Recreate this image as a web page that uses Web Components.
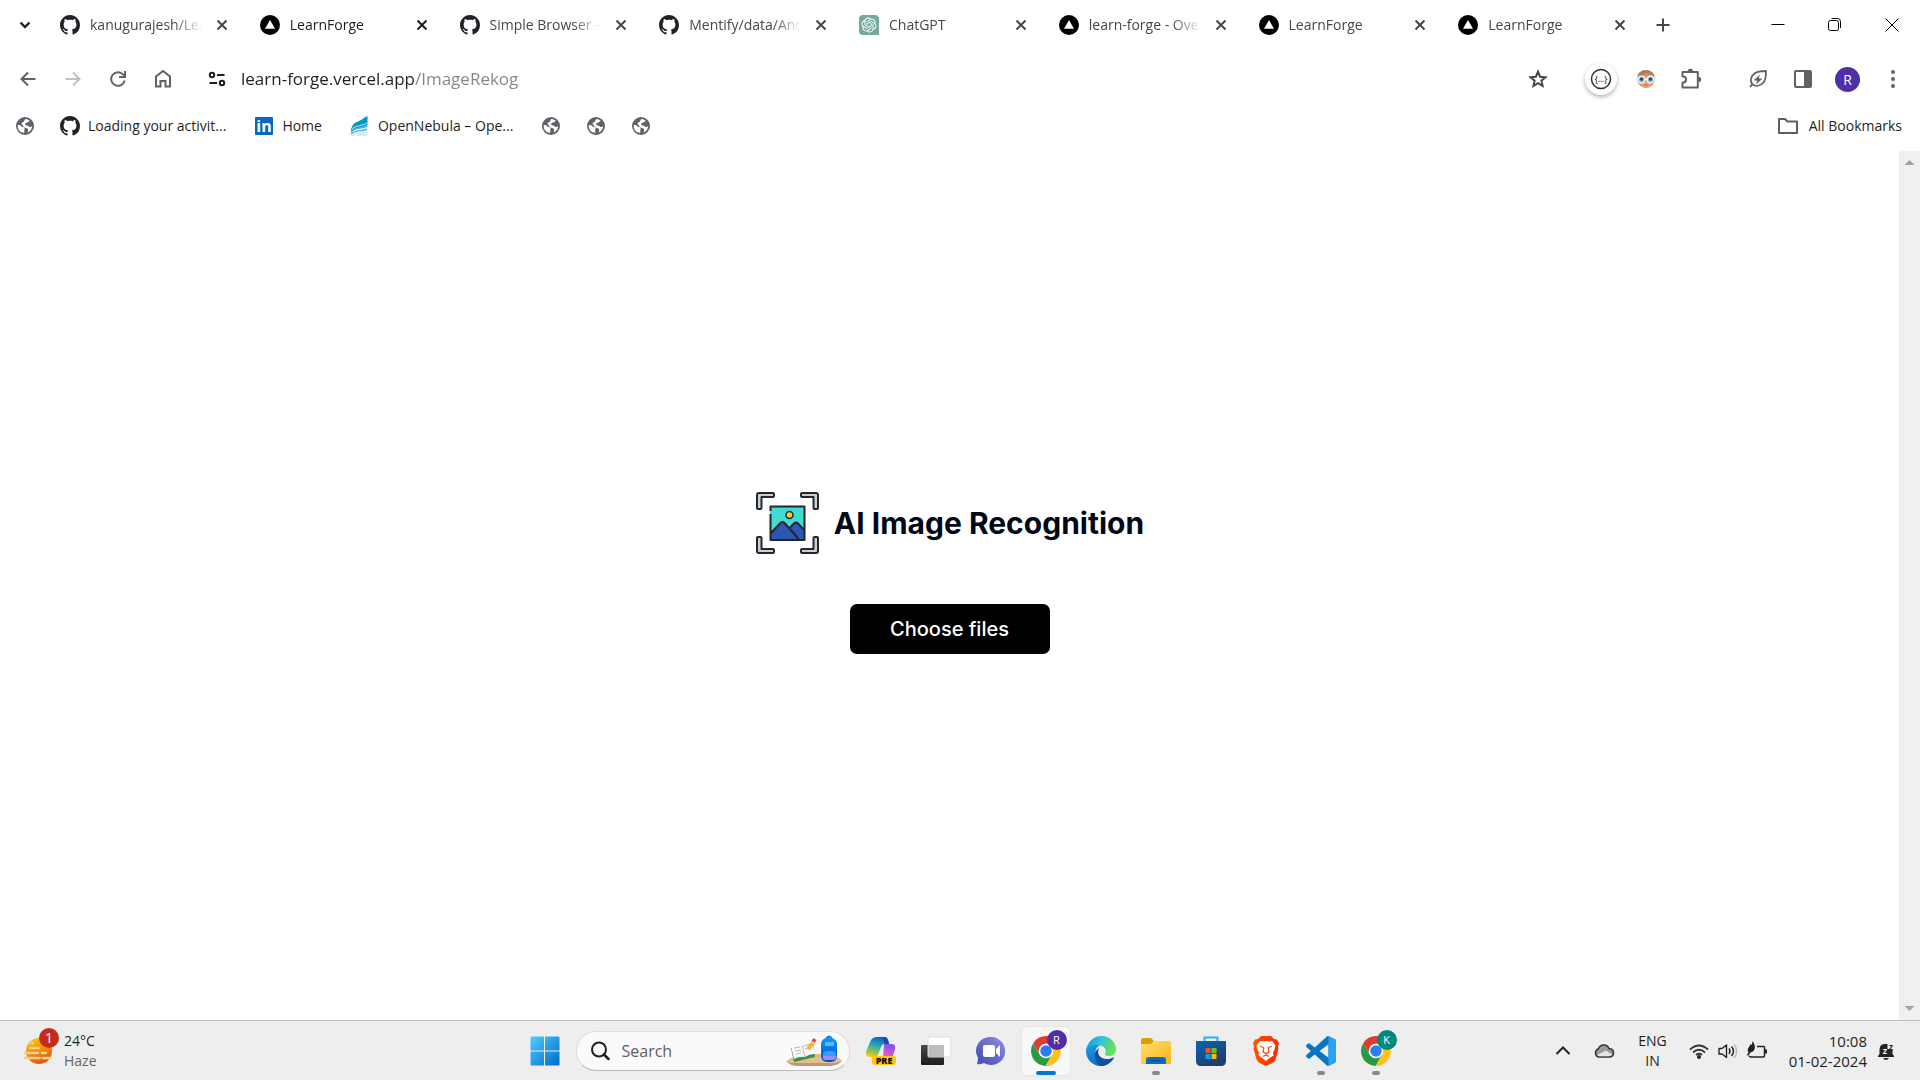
<!DOCTYPE html>
<html lang="en">
<head>
<meta charset="utf-8">
<title>LearnForge</title>
<style>
  body {
    margin: 0;
    background: #fff;
    color: #1f1f1f;
    font-family: "Open Sans", "Noto Sans", sans-serif;
    font-size: 14px;
    line-height: 20px;
  }
</style>
</head>
<body>
<desktop-screen>
  <tab-strip slot="chrome">
    <browser-tab icon="github">kanugurajesh/LearnForge</browser-tab>
    <browser-tab icon="vercel" active>LearnForge</browser-tab>
    <browser-tab icon="github">Simple Browser - Visual</browser-tab>
    <browser-tab icon="github">Mentify/data/Android</browser-tab>
    <browser-tab icon="chatgpt">ChatGPT</browser-tab>
    <browser-tab icon="vercel">learn-forge - Overview</browser-tab>
    <browser-tab icon="vercel">LearnForge</browser-tab>
    <browser-tab icon="vercel">LearnForge</browser-tab>
  </tab-strip>
  <address-bar slot="chrome"></address-bar>
  <bookmarks-bar slot="chrome">
    <bookmark-link icon="globe" label="Bookmark"></bookmark-link>
    <bookmark-link icon="github">Loading your activit...</bookmark-link>
    <bookmark-link icon="linkedin">Home</bookmark-link>
    <bookmark-link icon="nebula">OpenNebula – Ope...</bookmark-link>
    <bookmark-link icon="globe" label="Bookmark"></bookmark-link>
    <bookmark-link icon="globe" label="Bookmark"></bookmark-link>
    <bookmark-link icon="globe" label="Bookmark"></bookmark-link>
    <bookmark-link slot="end" icon="folder">All Bookmarks</bookmark-link>
  </bookmarks-bar>
  <image-rekog>AI Image Recognition</image-rekog>
  <task-bar slot="taskbar">
    <task-app icon="copilot" label="Copilot"></task-app>
    <task-app icon="taskview" label="Task view"></task-app>
    <task-app icon="meet" label="Chat"></task-app>
    <task-app icon="chrome" label="Google Chrome" badge="R" state="active"></task-app>
    <task-app icon="edge" label="Microsoft Edge"></task-app>
    <task-app icon="explorer" label="File Explorer" state="open"></task-app>
    <task-app icon="store" label="Microsoft Store"></task-app>
    <task-app icon="brave" label="Brave"></task-app>
    <task-app icon="vscode" label="Visual Studio Code" state="open"></task-app>
    <task-app icon="chrome" label="Google Chrome" badge="K" state="open"></task-app>
  </task-bar>
</desktop-screen>

<script>
// name: [width, height, markup]
const icons = {
  github: [20, 20, `<path transform="scale(1.25)" fill="#1f2328" d="M8 0C3.58 0 0 3.58 0 8c0 3.54 2.29 6.53 5.47 7.59.4.07.55-.17.55-.38 0-.19-.01-.82-.01-1.49-2.01.37-2.53-.49-2.69-.94-.09-.23-.48-.94-.82-1.13-.28-.15-.68-.52-.01-.53.63-.01 1.08.58 1.23.82.72 1.21 1.87.87 2.33.66.07-.52.28-.87.51-1.07-1.78-.2-3.64-.89-3.64-3.95 0-.87.31-1.59.82-2.15-.08-.2-.36-1.02.08-2.12 0 0 .67-.21 2.2.82.64-.18 1.32-.27 2-.27s1.36.09 2 .27c1.53-1.04 2.2-.82 2.2-.82.44 1.1.16 1.92.08 2.12.51.56.82 1.27.82 2.15 0 3.07-1.87 3.75-3.65 3.95.29.25.54.73.54 1.48 0 1.07-.01 1.93-.01 2.2 0 .21.15.46.55.38A8.01 8.01 0 0 0 16 8c0-4.42-3.58-8-8-8z"/>`],
  vercel: [20, 20, `<circle cx="10" cy="10" r="10"/><path fill="#fff" d="M10 5l5 8.700H5z"/>`],
  chatgpt: [20, 20, `<path fill="#74aa9c" d="M4 0h12a4 4 0 0 1 4 4v16H4a4 4 0 0 1-4-4V4a4 4 0 0 1 4-4z"/><path transform="translate(2.500 2.500) scale(.625)" fill="#fff" d="M22.2819 9.8211a5.9847 5.9847 0 0 0-.5157-4.9108 6.0462 6.0462 0 0 0-6.5098-2.9A6.0651 6.0651 0 0 0 4.9807 4.1818a5.9847 5.9847 0 0 0-3.9977 2.9 6.0462 6.0462 0 0 0 .7427 7.0966 5.98 5.98 0 0 0 .511 4.9107 6.051 6.051 0 0 0 6.5146 2.9001A5.9847 5.9847 0 0 0 13.2599 24a6.0557 6.0557 0 0 0 5.7718-4.2058 5.9894 5.9894 0 0 0 3.9977-2.9001 6.0557 6.0557 0 0 0-.7475-7.0729zm-9.022 12.6081a4.4755 4.4755 0 0 1-2.8764-1.0408l.1419-.0804 4.7783-2.7582a.7948.7948 0 0 0 .3927-.6813v-6.7369l2.02 1.1686a.071.071 0 0 1 .038.052v5.5826a4.504 4.504 0 0 1-4.4945 4.4944zm-9.6607-4.1254a4.4708 4.4708 0 0 1-.5346-3.0137l.142.0852 4.783 2.7582a.7712.7712 0 0 0 .7806 0l5.8428-3.3685v2.3324a.0804.0804 0 0 1-.0332.0615L9.74 19.9502a4.4992 4.4992 0 0 1-6.1408-1.6464zM2.3408 7.8956a4.485 4.485 0 0 1 2.3655-1.9728V11.6a.7664.7664 0 0 0 .3879.6765l5.8144 3.3543-2.0201 1.1685a.0757.0757 0 0 1-.071 0l-4.8303-2.7865A4.504 4.504 0 0 1 2.3408 7.872zm16.5963 3.8558L13.1038 8.364 15.1192 7.2a.0757.0757 0 0 1 .071 0l4.8303 2.7913a4.4944 4.4944 0 0 1-.6765 8.1042v-5.6772a.79.79 0 0 0-.407-.667zm2.0107-3.0231l-.142-.0852-4.7735-2.7818a.7759.7759 0 0 0-.7854 0L9.409 9.2297V6.8974a.0662.0662 0 0 1 .0284-.0615l4.8303-2.7866a4.4992 4.4992 0 0 1 6.6802 4.66zM8.3065 12.863l-2.02-1.1638a.0804.0804 0 0 1-.038-.0567V6.0742a4.4992 4.4992 0 0 1 7.3757-3.4537l-.142.0805L8.704 5.459a.7948.7948 0 0 0-.3927.6813zm1.0976-2.3654l2.602-1.4998 2.6069 1.4998v2.9994l-2.5974 1.4997-2.6067-1.4997Z"/>`],
  globe: [20, 20, `<circle cx="10" cy="10" r="9" fill="#5f6368"/><path fill="#fff" d="M2.800 9c2 0 3 .3 3.600 1.300.5.900 1.400 1 2.300 1 1 0 1.200.8.8 1.600-.4.700-.2 1.400-.2 3.800C5.800 17 2.800 14 2.800 10.500zM10.500 2.900c2 .2 3.500 1 4.600 2.200-1.600.2-1.800 1.300-2.900 1.500-1.200.2-1.900.6-2 1.700-.1.900.7 1.300 1.800 1.300 1.500 0 1.700 1.200 2.700 1.500.9.200 1.500-.2 2.400-1-.1 3-1.800 5.400-4.600 6.400.8-1.700 1-3.400-.4-4.200-1.400-.7-3.400-.6-4-2.300-.4-1.400-1.700-1.500-1.500-2.700.2-1.200 2-.9 2.500-2.100.4-.9.500-1.700 1.400-2.300z"/>`],
  linkedin: [20, 20, `<rect x="1" y="1" width="18" height="18" rx="1" fill="#0a66c2"/><text x="10" y="16" fill="#fff" font-family="Open Sans, sans-serif" font-size="16" font-weight="700" text-anchor="middle">in</text>`],
  nebula: [20, 20, `<path fill="#0098c3" d="M2 11C4 6 8 6 12 3.500 14 2 15 1 17.500 0v9C13 12 6 11 1 15c0-2 0-2.500 1-4z"/><path fill="none" stroke="#48b8da" stroke-width="1.500" d="M1 16c4-5 11-3 16-6M1 18c5-5 11-2 16-5"/><path fill="none" stroke="#a5dced" d="M2 20c5-4 10-2 15-4M7 20c4-2 6-1 10-1"/><path stroke="#fff" fill="none" stroke-width=".8" d="M2 13c4-4 11-3 15-6"/>`],
  folder: [24, 20, `<path fill="none" stroke="#5f5f5f" stroke-width="2" stroke-linejoin="round" d="M2 3h6l2.500 2.500H20V17H2z"/>`],
  chevron: [20, 20, `<path fill="none" stroke="#1f1f1f" stroke-width="2.400" d="M5.500 7.500L10 12l4.500-4.500"/>`],
  close: [20, 20, `<path fill="none" stroke="currentColor" stroke-width="2" d="M5.500 5.500l9 9m0-9l-9 9"/>`],
  plus: [20, 20, `<path fill="none" stroke="#474747" stroke-width="2" d="M10 3.500v13M3.500 10h13"/>`],
  minimize: [20, 20, `<path stroke="#000" d="M3.500 9.500h13"/>`],
  restore: [20, 20, `<path fill="none" stroke="#000" d="M3.500 7.500q0-2 2-2h6q2 0 2 2v6q0 2-2 2h-6q-2 0-2-2zM6.500 3.500h6q3 0 3 3v6.500"/>`],
  exit: [20, 20, `<path fill="none" stroke="#000" d="M3.500 3.500l13 13m0-13l-13 13"/>`],
  back: [20, 20, `<path fill="none" stroke="#5f6368" stroke-width="2" d="M17.500 10H4M10 3.500L3.500 10l6.500 6.500"/>`],
  forward: [20, 20, `<path fill="none" stroke="#bdc1c6" stroke-width="2" d="M2.500 10H16M10 3.500l6.500 6.500-6.500 6.500"/>`],
  reload: [20, 20, `<path fill="none" stroke="#5f6368" stroke-width="2" d="M16.600 11.500A6.800 6.800 0 1 1 15 5.400L16 6.500M17 2v6h-6"/>`],
  home: [20, 20, `<path fill="none" stroke="#5f6368" stroke-width="2" d="M3 17.500V7.500L10 2l7 5.500v10h-4.500V12h-5v5.500z"/>`],
  tune: [20, 20, `<g fill="none" stroke="#1f1f1f" stroke-width="2"><circle cx="5" cy="6" r="2.200"/><path d="M10 6h7.500M2.500 14H10"/><circle cx="15" cy="14" r="2.200"/></g>`],
  star: [20, 20, `<path fill="none" stroke="#474747" stroke-width="2" d="M10 2.700l2.100 5 5.400.5-4.100 3.500 1.200 5.300L10 14.200 5.400 17l1.200-5.300-4.100-3.500 5.400-.5z"/>`],
  json: [32, 32, `<circle cx="16" cy="16" r="9.500" fill="none" stroke="#333" stroke-width="1.500"/><text x="16" y="19" fill="#333" font-family="Open Sans, sans-serif" font-size="8" font-weight="600" text-anchor="middle">{...}</text>`],
  avatar: [20, 20, `<circle cx="10" cy="10" r="9" fill="#d8946a"/><path fill="#a9835a" d="M1.500 8C2 3 6 1 10 1s8 2 8.500 7l-3-2-6-2-4 3z"/><path fill="#e4a57f" d="M4 12h12c0 4-3 7-6 7s-6-3-6-7z"/><g fill="#6ba7bd" stroke="#e9f4f7" stroke-width="1.600"><circle cx="5.500" cy="10.500" r="3.300"/><circle cx="14.500" cy="10.500" r="3.300"/></g><path stroke="#e9f4f7" stroke-width="1.500" d="M0 9.500h2.500M17.500 9.500H20M8.500 10h3"/><circle cx="5.500" cy="10" r="1.500" fill="#1d4a63"/><circle cx="14.500" cy="10" r="1.500" fill="#1d4a63"/><path stroke="#b85c48" d="M8 16h4"/>`],
  puzzle: [22, 22, `<path fill="none" stroke="#5f6368" stroke-width="2" stroke-linejoin="round" d="M2.500 4h15.300v15.500H2.500v-4.800c4.800-.5 4.800-6 0-6.500z"/><path fill="#5f6368" d="M7.700 3.500a2.700 2.700 0 0 1 5.400 0zM18.500 8.800a2.700 2.700 0 0 1 0 5.400z"/>`],
  leaf: [20, 20, `<path fill="none" stroke="#5f6368" stroke-width="1.800" stroke-linejoin="round" d="M2 18l2.300-2.800C1.500 11.500 3 7 6.500 4.500 9.500 2.300 13 2 18 2c0 5 0 8.500-2.500 11.500C12.500 17 8 18 4.300 15.200"/><path fill="#5f6368" d="M12 5.500l-6.300 5.700 3.600.6L8 15.500l6.300-5.700-3.600-.6z"/>`],
  panel: [20, 20, `<rect x="2" y="2" width="16" height="16" rx="1" fill="none" stroke="#5f6368" stroke-width="2"/><path fill="#5f6368" d="M11 2h7v16h-7z"/>`],
  menu: [20, 20, `<g fill="#5f6368"><circle cx="10" cy="3" r="2"/><circle cx="10" cy="10" r="2"/><circle cx="10" cy="17" r="2"/></g>`],
  arrowUp: [21, 24, `<path fill="#a3a3a3" d="M5.500 14L10.500 9l5 5z"/>`],
  arrowDown: [21, 24, `<path fill="#a3a3a3" d="M5.500 10l5 5 5-5z"/>`],
  scan: [64, 64, `
    <g fill="#c8d0d6" stroke="#23272b" stroke-width="2" stroke-linejoin="round">
      <path d="M4 2h14q1 0 1 1v2q0 1-1 1H6.500v11q0 1-1 1H3q-1 0-1-1V4q0-2 2-2z"/>
      <path d="M60 2H47q-1 0-1 1v2q0 1 1 1h11.500v11q0 1 1 1H62q1 0 1-1V4q0-2-2-2z"/>
      <path d="M4 62h14q1 0 1-1v-2q0-1-1-1H6.500V47q0-1-1-1H3q-1 0-1 1v13q0 2 2 2z"/>
      <path d="M60 62H47q-1 0-1-1v-2q0-1 1-1h11.500V47q0-1 1-1H62q1 0 1 1v13q0 2-2 2z"/>
    </g>
    <path fill="#40dbd3" d="M15 15h35v34H15z"/>
    <path fill="#2d55b4" d="M15 42l12-12 7 7 6-6 10 9v9H15z"/>
    <path fill="none" stroke="#23272b" stroke-width="2" stroke-linejoin="round" d="M15.500 20v-4.500h34v33.500h-34V23M16 42l9.500-10q2-2 4 0L42 46l2 3M34 37.500l5-5q2-2 4 0l6.500 7"/>
    <circle cx="34.500" cy="24" r="3.500" fill="#fccb2e" stroke="#23272b" stroke-width="1.500"/>`],
  haze: [30, 30, `<defs><linearGradient id="s" x2=".4" y2="1"><stop stop-color="#ffd400"/><stop offset="1" stop-color="#e8590c"/></linearGradient></defs>
    <circle cx="15" cy="15" r="13" fill="url(#s)"/><g stroke="#e8cf92" stroke-width="2.600" stroke-linecap="round"><path d="M6 7h3M6 12h9M1 17h13M18 17h4M1 22h15M19 22h8"/></g>`],
  windows: [30, 30, `<defs><linearGradient id="w" gradientUnits="userSpaceOnUse" x1="0" y1="0" x2="30" y2="30"><stop stop-color="#4fd0ff"/><stop offset="1" stop-color="#0067c8"/></linearGradient></defs>
    <path fill="url(#w)" d="M1.500.500H14v14H.500v-13q0-1 1-1zM15 .500h13.500q1 0 1 1v13H15zM.500 15.500H14v14H1.500q-1 0-1-1zM15 15.500h14.500v13q0 1-1 1H15z"/>`],
  search: [20, 20, `<circle cx="9" cy="8.500" r="7" fill="none" stroke="#202020" stroke-width="2"/><path stroke="#202020" stroke-width="2.500" stroke-linecap="round" d="M14 13.500l4.500 4.500"/>`],
  school: [58, 34, `<defs><linearGradient id="b" x2="0" y2="1"><stop stop-color="#1296ff"/><stop offset="1" stop-color="#0050c5"/></linearGradient></defs>
    <path fill="#e2bd91" d="M1 27Q14 18 36 20q16 0 21 7-3 3-10 3H10q-6 0-9-3z"/><path fill="#c59769" d="M1 27q4 5 12 5h33q8-1 11-5-4 2-10 2H10q-6 0-9-2z"/>
    <path fill="#3b9149" d="M6 14l22-4 2 13-21 5z"/><path fill="#fafafa" d="M6 12q6-3 11-1 4-4 10-4l3 13q-6 0-10 3-5-1-11 2z"/><path stroke="#bbb" fill="none" d="M17 11l3 12M9 14l6-1M10 17l6-1M11 20l5-1M19 12l6-2M20 15l5-1"/>
    <path stroke="#ffb02e" stroke-width="4" d="M23 15l5-6"/><path stroke="#ef4b4b" stroke-width="4" d="M28 8l2-3"/>
    <path fill="none" stroke="#0c74d8" stroke-width="2" d="M41 5q3-5 6 0"/><rect x="36" y="4" width="16" height="24" rx="6" fill="url(#b)"/><path fill="#56b8ff" d="M40 8h9v4h-9z"/><rect x="38" y="17" width="13" height="9" rx="4" fill="#369cff"/><path fill="#a289ef" d="M38 22h13v2q-1 2-3 2h-7q-3 0-3-2z"/>`],
  copilot: [30, 30, `<defs><linearGradient id="c" x1=".6" x2=".3" y2="1"><stop stop-color="#0c5fd0"/><stop offset=".45" stop-color="#2ba9b0"/><stop offset=".75" stop-color="#8bc34a"/><stop offset="1" stop-color="#ffc914"/></linearGradient><linearGradient id="d" x1=".6" x2=".3" y2="1"><stop stop-color="#8050f0"/><stop offset=".5" stop-color="#e05bc0"/><stop offset="1" stop-color="#ff7a59"/></linearGradient></defs>
    <path fill="url(#d)" d="M18 8h7q5 0 4 5l-3 10q-2 5-7 5h-7q4-2 5-6z"/><path fill="url(#c)" d="M11 1h8q2 0 3 3l1 4h-4q-3 0-4 3l-3 8q-1 2-3 2H5q-6 0-5-5L4 6q2-5 7-5z"/><path fill="#144bb4" d="M16 1h3q2 0 3 3l1 4h-4l-2-5z"/>
    <rect x="6" y="20" width="24" height="9" rx="3" fill="#ffc60a"/><text x="18" y="28" fill="#111" font-family="Open Sans, sans-serif" font-size="9" font-weight="800" text-anchor="middle">PRE</text>`],
  taskview: [32, 30, `<defs><linearGradient id="t" x2="0" y2="1"><stop stop-color="#484848"/><stop offset="1" stop-color="#1c1c1c"/></linearGradient></defs>
    <rect x="1" y="9" width="23" height="20" rx="1" fill="url(#t)"/><rect x="8" y="1" width="23" height="20" rx="1" fill="#fff" stroke="#ddd"/><path fill="#bdbdbd" d="M8.500 9H24v12H8.500z"/>`],
  meet: [30, 30, `<defs><linearGradient id="m" x1="1" x2=".2" y2=".8"><stop stop-color="#a68ae6"/><stop offset=".4" stop-color="#7378d1"/><stop offset="1" stop-color="#4f58ba"/></linearGradient></defs>
    <path fill="url(#m)" d="M15 1a14 14 0 1 1-7 26q-4 2-7 1 1-3 1-6A14 14 0 0 1 15 1z"/><rect x="7" y="9" width="12" height="12" rx="2" fill="#fff"/><path fill="#fff" d="M20 13l4-4v12l-4-4z"/>`],
  chrome: [30, 30, `<g transform="translate(-1.400 -1.400) scale(.683)"><path fill="#e33b2e" d="M24 13.500H43.300A22 22 0 0 0 5.250 12.540L14.900 29.250A10.500 10.500 0 0 1 24 13.500z"/><path fill="#2a9a47" d="M14.900 29.250L5.250 12.540A22 22 0 0 0 23.450 45.970L33.100 29.250A10.500 10.500 0 0 1 14.900 29.250z"/><path fill="#fcc21b" d="M33.100 29.250L23.450 45.970A22 22 0 0 0 43.300 13.500H24A10.500 10.500 0 0 1 33.100 29.250z"/><circle cx="24" cy="24" r="10.500" fill="#fff"/><circle cx="24" cy="24" r="8.400" fill="#2f7cf0"/></g>`],
  edge: [30, 30, `<defs><linearGradient id="e" x2="1" y2=".3"><stop stop-color="#1598dc"/><stop offset=".5" stop-color="#2fc2df"/><stop offset="1" stop-color="#65e35c"/></linearGradient><linearGradient id="f" x2=".5" y2="1"><stop stop-color="#1aa0e4"/><stop offset="1" stop-color="#0d66c8"/></linearGradient></defs>
    <path fill="url(#e)" d="M.500 12C3 4 9 0 15 0c9 0 15 6 15 13 0 4.500-3 7-7 7-3 0-4.500-1-4-2 2-3 0-8-5-8.500C8 9 3 9 .500 12z"/><path fill="url(#f)" d="M.500 12C4 8 10 8 14 9.500c-4 1.500-5 5-4 8.500 2 7 9 9 16 6-3 4-7 6-11 6C6 30 0 23 0 15c0-1 .2-2 .500-3z"/><path fill="#124f9d" d="M13.500 12C11 15 12 20 16 22s9 1 11.500-.8c.7-.2.5.8-.500 2.300-3 4-7 6.500-12 6.500-4-2-6-6-6-11 0-4 2-6 4.500-7z"/>`],
  explorer: [30, 30, `<defs><linearGradient id="x" x2="1" y2="1"><stop stop-color="#ffdf68"/><stop offset="1" stop-color="#f8b51d"/></linearGradient></defs>
    <path fill="#dc9d00" d="M0 4q0-2 2-2h7q1 0 2 1l2 2-3 4H0z"/><path fill="url(#x)" d="M0 8h9q1 0 2-1l2-2h15q2 0 2 2v20q0 1-1 1H1q-1 0-1-1z"/><path fill="#0c6cbb" d="M5 28v-4q0-3 3-3h14q3 0 3 3v4z"/><path stroke="#084d8e" d="M9 24.500h12"/>`],
  store: [30, 30, `<defs><linearGradient id="o" x2=".6" y2="1"><stop stop-color="#0866b5"/><stop offset="1" stop-color="#213c68"/></linearGradient></defs>
    <path fill="none" stroke="#20b4ee" stroke-width="2" d="M8.500 7V1.500h13V7"/><path fill="url(#o)" d="M0 5h30v20q0 5-5 5H5q-5 0-5-5z"/><path fill="#f25022" d="M9.500 12h5v5h-5z"/><path fill="#7fba00" d="M15.500 12h5v5h-5z"/><path fill="#00a4ef" d="M9.500 18h5v5h-5z"/><path fill="#ffb900" d="M15.500 18h5v5h-5z"/>`],
  brave: [30, 30, `<defs><linearGradient id="v"><stop stop-color="#ff5500"/><stop offset="1" stop-color="#fb2a06"/></linearGradient></defs>
    <path fill="url(#v)" d="M10 0h10l3 3 3 .5 2 4-1 3 .5 2-3 11q-1 2-3 3.500L15 30l-6.500-3q-2-1.500-3-3.500l-3-11 .500-2-1-3 2-4 3-.5z"/>
    <path fill="#fff" d="M9 5l3 .5L15 5l3 .5 3-.5 3.500 4.500-1 4-1.500 3 .5 3-4 2.500L15 25l-3.500-3-4-2.500.5-3-1.500-3-1-4z"/><path fill="none" stroke="#fd3f05" stroke-width="1.200" d="M9 10.500l4 1M21 10.500l-4 1M13 11.500l-1 4.500 3 1.500 3-1.500-1-4.500M12 20.500l3-1.500 3 1.500M15 17.500V19"/>`],
  vscode: [30, 30, `<path transform="scale(1.250)" fill="#0877c2" d="M23.15 2.587L18.21.21a1.494 1.494 0 0 0-1.705.29l-9.46 8.63-4.12-3.128a.999.999 0 0 0-1.276.057L.327 7.261A1 1 0 0 0 .326 8.74L3.899 12 .326 15.26a1 1 0 0 0 .001 1.479L1.65 17.94a.999.999 0 0 0 1.276.057l4.12-3.128 9.46 8.63a1.492 1.492 0 0 0 1.704.29l4.942-2.377A1.5 1.5 0 0 0 24 20.06V3.939a1.5 1.5 0 0 0-.85-1.352zm-5.146 14.861L10.826 12l7.178-5.448v10.896z"/><path fill="#28a4f2" d="M22.500.200l6.500 3q1 .6 1 1.700v20.200q0 1.100-1 1.700l-6.500 3z"/>`],
  trayUp: [20, 20, `<path fill="none" stroke="#222" stroke-width="2" d="M3.500 13L10 6.500l6.500 6.500"/>`],
  cloud: [22, 20, `<path fill="#9a9a9a" stroke="#333" stroke-width="1.500" d="M5.500 16a4.300 4.300 0 0 1 0-8.200C7 3 14 2.500 16 7.500c6 .5 6 8.500 0 8.500z"/><path fill="#e4e4e4" d="M4 14l9-4.500 6 4q-1 1.700-3 1.700H6z"/>`],
  wifi: [22, 20, `<g fill="none" stroke="#333" stroke-width="1.700"><path d="M2 8.500q9-8 18 0M5 11.500q6-5.500 12 0M8 14q3-2.500 6 0"/></g><circle cx="11" cy="16" r="2" fill="#222"/>`],
  volume: [22, 20, `<path fill="none" stroke="#222" stroke-width="1.400" stroke-linejoin="round" d="M2 7.500h3L9.500 4v12.500L5 13H2zM12 7.500q2 2.700 0 5.500M14.500 5.500q4 4.700 0 9.500"/><path fill="none" stroke="#bbb" stroke-width="1.400" d="M17 3.500q5.500 6.700 0 13.500"/>`],
  battery: [22, 20, `<path fill="none" stroke="#222" stroke-width="1.500" d="M11 5.500h6.500q1 0 1 1v8.500q0 1-1 1H5q-1 0-2-1"/><path fill="#222" d="M19 8.500h2v4h-2zM6.500 0c3 4 4 10-2 11.500L2 15l-1-1 1.500-3C0 8 4 6 4.500 3L6 4z"/>`],
  bell: [20, 20, `<path fill="#222" d="M2 16v-1l1.500-2V9q0-6 5-6h3v5h5v5l1.500 2v1zM7 17h6q-3 4-6 0z"/><text x="9" y="13" fill="#eee" font-family="Open Sans, sans-serif" font-size="9" font-weight="700" text-anchor="middle">z</text><text x="15" y="9" fill="#222" font-family="Open Sans, sans-serif" font-size="8" font-weight="700" text-anchor="middle">z</text>`]
};

// Shared by every element that holds buttons
const reset = `
  button {
    display: flex;
    align-items: center;
    justify-content: center;
    flex: none;
    padding: 0;
    border: 0;
    background: none;
    color: inherit;
    font: inherit;
  }
`;

function render(element, markup) {
  const template = document.createElement('template');
  template.innerHTML = markup;
  element.attachShadow({ mode: 'open' });
  element.shadowRoot.appendChild(template.content.cloneNode(true));
}

class UIIcon extends HTMLElement {
  connectedCallback() {
    if (this.shadowRoot) return;
    const [width, height, markup] = icons[this.getAttribute('name')];
    render(this, `
      <style>
        :host { display: block; flex: none; }
        svg { display: block; overflow: visible; }
      </style>
      <svg width="${width}" height="${height}" viewBox="0 0 ${width} ${height}" aria-hidden="true">${markup}</svg>
    `);
  }
}

class DesktopScreen extends HTMLElement {
  constructor() {
    super();
    render(this, `
      <style>
        :host {
          display: flex;
          flex-direction: column;
          min-height: 100vh;
        }
        .view {
          display: flex;
          flex: 1;
        }
        .scroll {
          display: flex;
          flex-direction: column;
          justify-content: space-between;
          width: 21px;
          background: #f0f0f0;
        }
      </style>
      <header><slot name="chrome"></slot></header>
      <div class="view">
        <slot></slot>
        <div class="scroll"><ui-icon name="arrowUp"></ui-icon><ui-icon name="arrowDown"></ui-icon></div>
      </div>
      <slot name="taskbar"></slot>
    `);
  }
}

class TabStrip extends HTMLElement {
  constructor() {
    super();
    render(this, `
      <style>
        ${reset}
        :host {
          display: flex;
          align-items: center;
          height: 50px;
        }
        .search { width: 50px; }
        .new { width: 30px; }
        .tabs {
          display: flex;
          flex: 0 1 1598px;
          min-width: 0;
        }
        .window {
          display: flex;
          margin-left: auto;
        }
        .window button { width: 57px; }
      </style>
      <button class="search" aria-label="Search tabs"><ui-icon name="chevron"></ui-icon></button>
      <div class="tabs"><slot></slot></div>
      <button class="new" aria-label="New tab"><ui-icon name="plus"></ui-icon></button>
      <div class="window">
        <button aria-label="Minimize"><ui-icon name="minimize"></ui-icon></button>
        <button aria-label="Restore"><ui-icon name="restore"></ui-icon></button>
        <button aria-label="Close"><ui-icon name="exit"></ui-icon></button>
      </div>
    `);
  }
}

class BrowserTab extends HTMLElement {
  connectedCallback() {
    if (this.shadowRoot) return;
    render(this, `
      <style>
        ${reset}
        :host {
          display: flex;
          align-items: center;
          gap: 10px;
          flex: 1;
          min-width: 0;
          box-sizing: border-box;
          padding: 0 18px 0 10px;
          color: #474747;
        }
        :host([active]) { color: #1f1f1f; }
        .tab {
          flex: 1;
          justify-content: flex-start;
          gap: 10px;
          min-width: 0;
        }
        .title {
          flex: 1;
          overflow: hidden;
          text-align: left;
          white-space: nowrap;
          -webkit-mask-image: linear-gradient(to left, transparent, #000 28px);
          mask-image: linear-gradient(to left, transparent, #000 28px);
        }
      </style>
      <button class="tab"><ui-icon name="${this.getAttribute('icon')}"></ui-icon><span class="title"><slot></slot></span></button>
      <button aria-label="Close tab"><ui-icon name="close"></ui-icon></button>
    `);
  }
}

class AddressBar extends HTMLElement {
  constructor() {
    super();
    render(this, `
      <style>
        ${reset}
        :host {
          display: flex;
          align-items: center;
          height: 58px;
          padding: 0 5px;
        }
        button { width: 45px; }
        .group { display: flex; align-items: center; }
        .url { flex: 1; margin: 0 18px 0 9px; }
        /* the path part of the address is greyed out */
        input {
          flex: 1;
          min-width: 0;
          margin-left: 2px;
          padding: 0;
          border: 0;
          outline: 0;
          color: #1f1f1f;
          font: inherit;
          font-size: 17px;
          line-height: 24px;
          background: linear-gradient(to right, #1f1f1f 173px, #80868b 173px);
          -webkit-background-clip: text;
          background-clip: text;
          -webkit-text-fill-color: transparent;
        }
        .extensions { margin-right: 22px; }
        .round {
          border-radius: 50%;
          box-shadow: 0 2px 4px rgba(0, 0, 0, .3);
        }
        .profile {
          width: 25px;
          height: 25px;
          border-radius: 50%;
          background: #512da8;
          color: #fff;
          line-height: 25px;
        }
      </style>
      <div class="group">
        <button aria-label="Back"><ui-icon name="back"></ui-icon></button>
        <button aria-label="Forward"><ui-icon name="forward"></ui-icon></button>
        <button aria-label="Reload"><ui-icon name="reload"></ui-icon></button>
        <button aria-label="Home"><ui-icon name="home"></ui-icon></button>
      </div>
      <div class="group url">
        <button aria-label="Site information"><ui-icon name="tune"></ui-icon></button>
        <input type="text" aria-label="Address" value="learn-forge.vercel.app/ImageRekog">
        <button aria-label="Bookmark this tab"><ui-icon name="star"></ui-icon></button>
      </div>
      <div class="group extensions">
        <button aria-label="JSON viewer"><ui-icon class="round" name="json"></ui-icon></button>
        <button aria-label="Avatar"><ui-icon name="avatar"></ui-icon></button>
        <button aria-label="Extensions"><ui-icon name="puzzle"></ui-icon></button>
      </div>
      <div class="group">
        <button aria-label="Energy saver"><ui-icon name="leaf"></ui-icon></button>
        <button aria-label="Side panel"><ui-icon name="panel"></ui-icon></button>
        <button><span class="profile">R</span></button>
        <button aria-label="Menu"><ui-icon name="menu"></ui-icon></button>
      </div>
    `);
  }
}

class BookmarksBar extends HTMLElement {
  constructor() {
    super();
    render(this, `
      <style>
        :host {
          display: flex;
          align-items: center;
          gap: 25px;
          height: 36px;
          padding: 0 15px 7px 15px;
        }
        .end { margin-left: auto; }
      </style>
      <slot></slot>
      <div class="end"><slot name="end"></slot></div>
    `);
  }
}

class BookmarkLink extends HTMLElement {
  connectedCallback() {
    if (this.shadowRoot) return;
    const label = this.getAttribute('label');
    render(this, `
      <style>
        :host { display: block; }
        a {
          display: flex;
          align-items: center;
          gap: 8px;
          color: #1f1f1f;
          text-decoration: none;
          white-space: nowrap;
        }
        span { padding-right: 3px; }
      </style>
      <a href="#" ${label ? `aria-label="${label}"` : ''}><ui-icon name="${this.getAttribute('icon')}"></ui-icon>${label ? '' : '<span><slot></slot></span>'}</a>
    `);
  }
}

class ImageRekog extends HTMLElement {
  constructor() {
    super();
    render(this, `
      <style>
        ${reset}
        :host {
          display: flex;
          flex: 1;
          flex-direction: column;
          align-items: center;
          justify-content: center;
          gap: 49px;
          padding-bottom: 26px;
          font-family: Inter, sans-serif;
        }
        .title {
          display: flex;
          align-items: center;
          gap: 15px;
        }
        h1 {
          margin: 0;
          color: #020817;
          font-size: 30px;
          font-weight: 700;
          line-height: 40px;
        }
        button {
          width: 200px;
          height: 50px;
          border-radius: 7px;
          background: #000;
          color: #fff;
          font-size: 20px;
          font-weight: 500;
        }
      </style>
      <div class="title"><ui-icon name="scan"></ui-icon><h1><slot></slot></h1></div>
      <button>Choose files</button>
    `);
  }
}

class TaskBar extends HTMLElement {
  constructor() {
    super();
    render(this, `
      <style>
        ${reset}
        :host {
          display: grid;
          grid-template-columns: 1fr auto 1fr;
          align-items: center;
          height: 59px;
          border-top: 1px solid #bdbdbd;
          background: #eee;
        }
        .weather {
          justify-self: start;
          gap: 10px;
          margin-left: 24px;
          text-align: left;
        }
        .weather small { display: block; color: #666; font-size: 14px; }
        .sun { position: relative; }
        .badge {
          position: absolute;
          top: -8px;
          right: -5px;
          width: 20px;
          border-radius: 50%;
          background: #c42b1c;
          color: #fff;
          text-align: center;
        }
        .apps, .tray { display: flex; align-items: center; gap: 7px; }
        .start { width: 48px; height: 48px; }
        .find {
          display: flex;
          align-items: center;
          gap: 12px;
          box-sizing: border-box;
          width: 274px;
          height: 40px;
          padding: 0 6px 0 13px;
          border: 1px solid #ddd;
          border-bottom-color: #bbb;
          border-radius: 20px;
          background: #fafafa;
        }
        input {
          flex: 1;
          min-width: 0;
          padding: 0;
          border: 0;
          outline: 0;
          background: none;
          font: inherit;
          font-size: 16px;
        }
        input::placeholder { color: #5f5f5f; }
        .tray { justify-self: end; padding-right: 24px; }
        .tray button { text-align: center; }
        .up { margin-right: 13px; }
        .lang { margin: 0 14px 0 16px; }
        .tray .clock {
          margin: 0 2px 0 14px;
          font-size: 15px;
          text-align: right;
        }
      </style>
      <button class="weather"><span class="sun"><ui-icon name="haze"></ui-icon><span class="badge">1</span></span><span>24°C<small>Haze</small></span></button>
      <div class="apps">
        <button class="start" aria-label="Start"><ui-icon name="windows"></ui-icon></button>
        <label class="find"><ui-icon name="search"></ui-icon><input type="text" aria-label="Search" placeholder="Search"><ui-icon name="school"></ui-icon></label>
        <slot></slot>
      </div>
      <div class="tray">
        <button class="up" aria-label="Show hidden icons"><ui-icon name="trayUp"></ui-icon></button>
        <button aria-label="OneDrive"><ui-icon name="cloud"></ui-icon></button>
        <button class="lang">ENG<br>IN</button>
        <button aria-label="Network"><ui-icon name="wifi"></ui-icon></button>
        <button aria-label="Volume"><ui-icon name="volume"></ui-icon></button>
        <button aria-label="Battery"><ui-icon name="battery"></ui-icon></button>
        <button class="clock">10:08<br>01-02-2024</button>
        <button aria-label="Notifications"><ui-icon name="bell"></ui-icon></button>
      </div>
    `);
  }
}

class TaskApp extends HTMLElement {
  connectedCallback() {
    if (this.shadowRoot) return;
    const badge = this.getAttribute('badge');
    render(this, `
      <style>
        ${reset}
        :host { display: block; }
        button {
          position: relative;
          box-sizing: border-box;
          width: 48px;
          height: 48px;
          border-radius: 5px;
        }
        :host([state="active"]) button {
          background: #f8f8f8;
          box-shadow: 0 0 1px 1px #e4e4e4;
        }
        :host([state]) button::after {
          content: "";
          position: absolute;
          bottom: 0;
          width: 8px;
          height: 4px;
          border-radius: 2px;
          background: #888;
        }
        :host([state="active"]) button::after {
          width: 20px;
          background: #0078d4;
        }
        .badge {
          position: absolute;
          top: 3px;
          right: 3px;
          width: 20px;
          border-radius: 50%;
          background: #512da8;
          color: #fff;
          font-size: 11px;
        }
        .badge.K { background: #00897b; }
      </style>
      <button aria-label="${this.getAttribute('label')}"><ui-icon name="${this.getAttribute('icon')}"></ui-icon>${badge ? `<span class="badge ${badge}">${badge}</span>` : ''}</button>
    `);
  }
}

window.customElements.define('ui-icon', UIIcon);
window.customElements.define('desktop-screen', DesktopScreen);
window.customElements.define('tab-strip', TabStrip);
window.customElements.define('browser-tab', BrowserTab);
window.customElements.define('address-bar', AddressBar);
window.customElements.define('bookmarks-bar', BookmarksBar);
window.customElements.define('bookmark-link', BookmarkLink);
window.customElements.define('image-rekog', ImageRekog);
window.customElements.define('task-bar', TaskBar);
window.customElements.define('task-app', TaskApp);
</script>
</body>
</html>
